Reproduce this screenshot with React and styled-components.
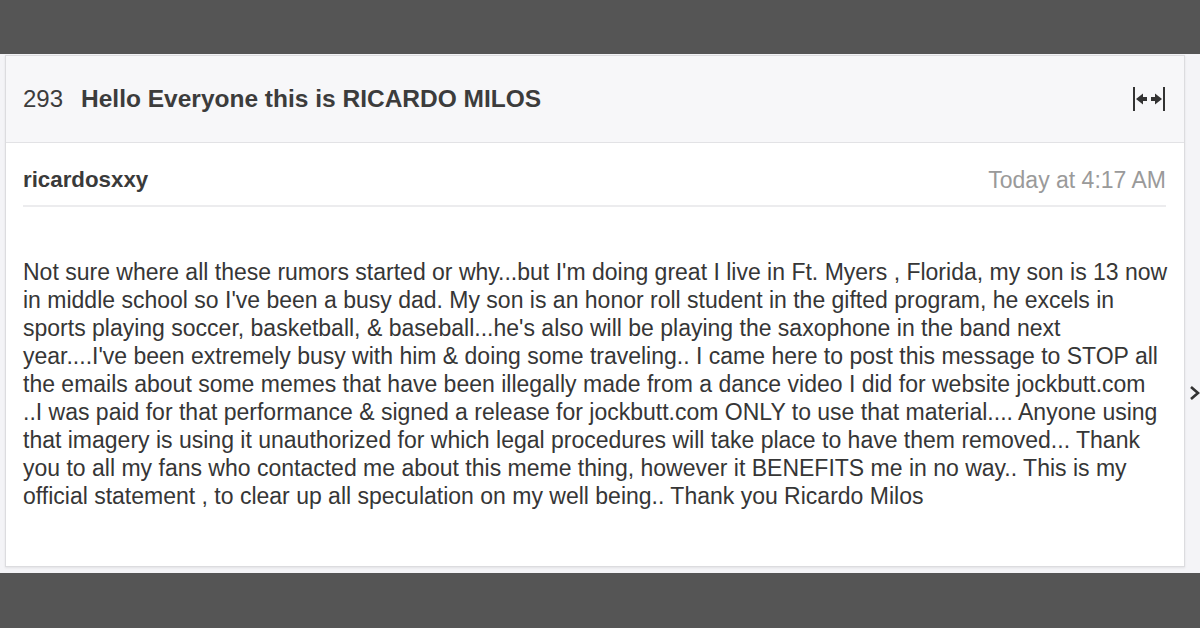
import React from "react";
import styled, { createGlobalStyle } from "styled-components";

const GlobalStyle = createGlobalStyle`
  html, body {
    margin: 0;
    padding: 0;
    background: #555555;
    font-family: "Liberation Sans", Arial, sans-serif;
  }
`;

const Page = styled.div`
  width: 1200px;
  height: 628px;
  display: flex;
  flex-direction: column;
  overflow: hidden;
  background: #555555;
`;

const Bar = styled.div`
  height: ${props => props.h}px;
  background: #555555;
  flex-shrink: 0;
`;

// 게시글 카드가 놓이는 밝은 영역
const Stage = styled.div`
  position: relative;
  height: 519px;
  background: #f4f4f7;
  padding: 1px 15px 0 5px;
  box-sizing: border-box;
`;

const Card = styled.div`
  height: 510px;
  background: white;
  border: 1px solid #dcdcdf;
  box-shadow: 0 1px 2px rgba(0, 0, 0, 0.08);
  display: flex;
  flex-direction: column;
`;

const Head = styled.div`
  height: 86px;
  display: flex;
  align-items: center;
  padding: 0 18px 0 17px;
  background: #f7f7f9;
  border-bottom: 1px solid #e2e2e5;
  color: #3c3c3c;
  font-size: 24px;
`;

const Number = styled.span`
  margin-right: 18px;
`;

const Title = styled.span`
  font-weight: bold;
  font-size: 24.5px;
`;

const Expand = styled.svg`
  margin-left: auto;
  width: 34px;
  height: 26px;
`;

const Body = styled.div`
  padding: 0 18px 0 17px;
`;

const Meta = styled.div`
  height: 64px;
  box-sizing: border-box;
  padding-top: 12px;
  display: flex;
  align-items: center;
  justify-content: space-between;
  border-bottom: 2px solid #ececee;
`;

const Username = styled.div`
  font-weight: bold;
  font-size: 22.3px;
  color: #3a3a3a;
`;

const Time = styled.div`
  font-size: 23px;
  color: #9a9a9a;
`;

const Content = styled.div`
  margin-top: 51px;
  font-size: 23px;
  line-height: 28px;
  color: #363636;
`;

// 한 줄씩 원본과 같은 위치에서 끊어줍니다.
const Line = styled.div`
  white-space: nowrap;
`;

const Chevron = styled.svg`
  position: absolute;
  left: 1189px;
  top: 331px;
  width: 12px;
  height: 16px;
`;

const lines = [
  "Not sure where all these rumors started or why...but I'm doing great I live in Ft. Myers , Florida, my son is 13 now",
  "in middle school so I've been a busy dad. My son is an honor roll student in the gifted program, he excels in",
  "sports playing soccer, basketball, & baseball...he's also will be playing the saxophone in the band next",
  "year....I've been extremely busy with him & doing some traveling.. I came here to post this message to STOP all",
  "the emails about some memes that have been illegally made from a dance video I did for website jockbutt.com",
  "..I was paid for that performance & signed a release for jockbutt.com ONLY to use that material.... Anyone using",
  "that imagery is using it unauthorized for which legal procedures will take place to have them removed... Thank",
  "you to all my fans who contacted me about this meme thing, however it BENEFITS me in no way.. This is my",
  "official statement , to clear up all speculation on my well being.. Thank you Ricardo Milos"
];

const App = () => (
  <Page>
    <GlobalStyle />
    <Bar h={54} />
    <Stage>
      <Card>
        <Head>
          <Number>293</Number>
          <Title>Hello Everyone this is RICARDO MILOS</Title>
          <Expand viewBox="0 0 34 26">
            <rect x="1" y="1" width="2" height="24" fill="#333" />
            <rect x="31" y="1" width="2" height="24" fill="#333" />
            <path d="M4 13 L11 7.5 L11 11 L15 11 L15 15 L11 15 L11 18.5 Z" fill="#333" />
            <path d="M30 13 L23 7.5 L23 11 L19 11 L19 15 L23 15 L23 18.5 Z" fill="#333" />
          </Expand>
        </Head>
        <Body>
          <Meta>
            <Username>ricardosxxy</Username>
            <Time>Today at 4:17 AM</Time>
          </Meta>
          <Content>
            {lines.map((line, i) => (
              <Line key={i}>{line}</Line>
            ))}
          </Content>
        </Body>
      </Card>
      <Chevron viewBox="0 0 12 16">
        <path d="M2 2 L9 8 L2 14" fill="none" stroke="#333" strokeWidth="2.6" />
      </Chevron>
    </Stage>
    <Bar h={55} />
  </Page>
);

export default App;
